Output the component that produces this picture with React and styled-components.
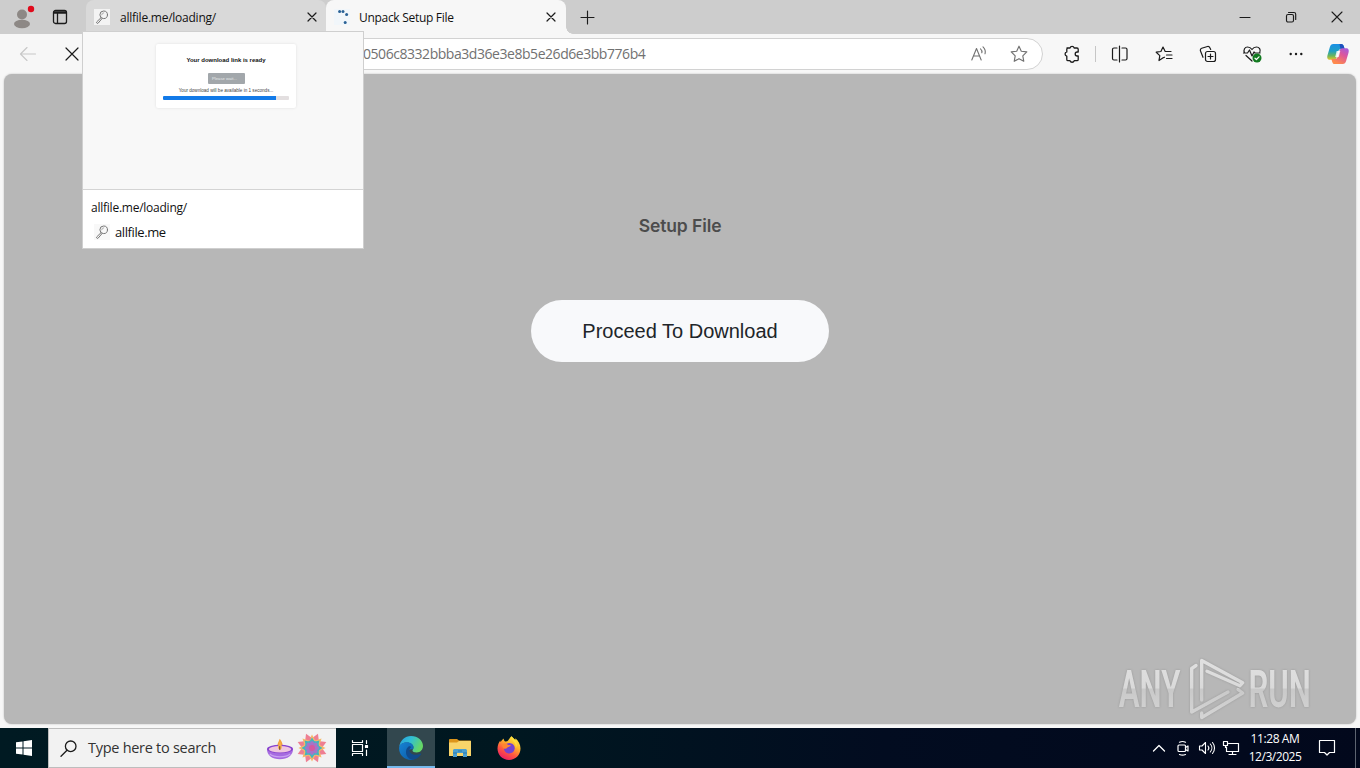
import React from "react";
import styled, { createGlobalStyle } from "styled-components";

const Global = createGlobalStyle`
  * { box-sizing: border-box; }
  html, body { margin: 0; padding: 0; background: #f7f7f7; overflow: hidden; }
  body { font-family: "Open Sans", "Noto Sans", sans-serif; color: #111; }
  svg { display: block; flex: none; }
`;

const Screen = styled.div`
  position: relative;
  display: flex;
  flex-direction: column;
  width: 1360px;
  height: 768px;
  background: #f7f7f7;
  overflow: hidden;
`;

const Label = styled.span`
  font-size: ${(p) => p.$size || 12}px;
  line-height: ${(p) => p.$line || 18}px;
  letter-spacing: ${(p) => p.$track || 0}px;
  color: ${(p) => p.$color || "#111"};
  white-space: nowrap;
`;

const Slot = styled.div`
  display: flex;
  align-items: center;
  justify-content: center;
  flex: none;
  width: ${(p) => p.$w}px;
  height: 100%;
`;

/* ---------- tab strip ---------- */
const TabStrip = styled.header`
  display: flex;
  height: 34px;
  flex: none;
  background: #cdcdcd;
`;
const ProfileArea = styled.div`
  display: flex;
  width: 86px;
  padding-left: 4px;
`;
const Tab = styled.div`
  display: flex;
  align-items: center;
  position: relative;
  width: 240px;
  height: 34px;
  padding: 0 8px;
  border-radius: 8px 8px 0 0;
  background: ${(p) => (p.$active ? "#f7f7f7" : "#d9d9d9")};
  &::after {
    content: "";
    display: ${(p) => (p.$active ? "block" : "none")};
    position: absolute;
    right: -7px;
    bottom: 0;
    width: 7px;
    height: 7px;
    background: radial-gradient(circle at 100% 0, transparent 6.5px, #f7f7f7 7px);
  }
`;
const TabTitle = styled.div`
  flex: 1;
  display: flex;
  padding: 1px 0 0 ${(p) => p.$pad}px;
`;
const WindowButtons = styled.div`
  display: flex;
  margin-left: auto;
`;
const Favicon = styled.span`
  display: flex;
  align-items: center;
  justify-content: center;
  width: 16px;
  height: 16px;
  background: ${(p) => p.$bg || "#f3f3f3"};
`;

/* ---------- toolbar ---------- */
const Toolbar = styled.nav`
  display: flex;
  align-items: center;
  height: 40px;
  flex: none;
  padding-left: 6px;
`;
const AddressBar = styled.div`
  display: flex;
  align-items: center;
  width: 949px;
  height: 32px;
  padding: 0 3px 0 268px;
  border: 1px solid #d2d2d2;
  border-radius: 16px;
  background: #fff;
`;
const AddressActions = styled.div`
  display: flex;
  height: 100%;
  margin-left: auto;
`;
const ToolGroup = styled.div`
  display: flex;
  height: 100%;
  align-items: center;
  padding-left: 9px;
`;
const Divider = styled.span`
  width: 1px;
  height: 16px;
  margin: 0 2px 0 3px;
  background: #c6c6c6;
`;

/* ---------- page ---------- */
const Page = styled.main`
  position: relative;
  display: flex;
  flex-direction: column;
  align-items: center;
  height: 650px;
  flex: none;
  margin: 0 4px 4px;
  padding-top: 138px;
  border-radius: 8px;
  background: #b7b7b7;
  box-shadow: 0 0 2px rgba(0, 0, 0, 0.25);
`;
const Heading = styled.h1`
  margin: 0;
  font: 600 17.5px/28px Inter, sans-serif;
  letter-spacing: -0.1px;
  color: #4c4c4c;
`;
const ProceedButton = styled.button`
  width: 298px;
  height: 62px;
  margin-top: 60px;
  padding: 0;
  border: 0;
  border-radius: 31px;
  background: #f8f9fb;
  color: #212529;
  font: 20px/30px "Liberation Sans", sans-serif;
`;
const Watermark = styled.div`
  position: absolute;
  right: 38px;
  bottom: 2px;
`;

/* ---------- tab hover card ---------- */
const HoverCard = styled.aside`
  position: absolute;
  z-index: 5;
  left: 82px;
  top: 31px;
  width: 282px;
  height: 218px;
  border: 1px solid #cfcfcf;
  background: #fff;
`;
const Preview = styled.div`
  display: flex;
  justify-content: center;
  align-items: flex-start;
  height: 158px;
  padding: 12px 0 0 6px;
  border-bottom: 1px solid #d4d4d4;
  background: #f8f8f8;
`;
const MiniCard = styled.div`
  display: flex;
  flex-direction: column;
  align-items: center;
  width: 140px;
  height: 64px;
  padding: 12px 7px 0;
  border-radius: 2px;
  background: #fff;
  box-shadow: 0 0 3px rgba(0, 0, 0, 0.1);
`;
const MiniTitle = styled.b`
  font: 700 6px/9px "Liberation Sans", sans-serif;
  color: #111;
  white-space: nowrap;
`;
const MiniButton = styled.span`
  width: 37px;
  height: 11px;
  margin-top: 8px;
  padding-right: 3px;
  border-radius: 1px;
  background: #a2a7ab;
  color: #e5e7e9;
  font: 4.2px/11px "Liberation Sans", sans-serif;
  text-align: center;
`;
const MiniNote = styled.span`
  margin-top: 3px;
  font: 4.6px/7px "Liberation Sans", sans-serif;
  color: #444;
  white-space: nowrap;
`;
const MiniTrack = styled.span`
  width: 126px;
  height: 4px;
  margin-top: 2px;
  border-radius: 1px;
  background: linear-gradient(90deg, #127ae8 113px, #e3dfe0 113px);
`;
const CardInfo = styled.div`
  display: flex;
  flex-direction: column;
  padding: 9px 8px 0;
`;
const CardSite = styled.div`
  display: flex;
  align-items: center;
  gap: 5px;
  margin-top: 6px;
  padding-left: 3px;
`;

/* ---------- taskbar ---------- */
const Taskbar = styled.footer`
  display: flex;
  height: 40px;
  flex: none;
  background: linear-gradient(90deg, #001a22 0, #001720 38%, #020c20 65%, #02081c 100%);
`;
const SearchBox = styled.div`
  display: flex;
  align-items: center;
  width: 288px;
  height: 40px;
  padding: 0 8px 0 11px;
  border: 1px solid #bdbdbd;
  border-right-width: 0;
  background: #f2f2f2;
`;
const SearchText = styled.div`
  flex: 1;
  display: flex;
  padding-left: 11px;
`;
const SearchArt = styled.div`
  display: flex;
  align-items: center;
  gap: 2px;
`;
const TaskButton = styled.div`
  display: flex;
  align-items: center;
  justify-content: center;
  width: ${(p) => p.$w || 48}px;
  height: 40px;
  padding-right: ${(p) => p.$shift || 0}px;
  ${(p) => p.$active && "background: #32474e; box-shadow: inset 0 -2px #76b9ed;"}
`;
const Tray = styled.div`
  display: flex;
  margin-left: auto;
`;
const Clock = styled.div`
  display: flex;
  flex-direction: column;
  align-items: center;
  width: 64px;
  padding-top: 2px;
`;
const ShowDesktop = styled.div`
  width: 5px;
  margin-left: 8px;
  border-left: 1px solid #5d6470;
`;

const Icon = ({ w = 20, h, stroke = "#1b1b1b", sw = 1.15, children }) => (
  <svg width={w} height={h || w} viewBox={`0 0 ${w} ${h || w}`} fill="none" stroke={stroke} strokeWidth={sw} strokeLinecap="round" strokeLinejoin="round">
    {children}
  </svg>
);

const MiniGlass = () => (
  <Icon w={16} stroke="#777" sw={1}>
    <circle cx="9.7" cy="5.8" r="3.8" />
    <path d="M7 8.7 2.6 13a1 1 0 0 0 1.5 1.2L8 9.6" />
    <path d="M7.7 5.8a2 2 0 0 1 2-2" stroke="#aaa" />
  </Icon>
);

const Cross = ({ s = 8, sw = 1.2 }) => (
  <Icon w={s + 2} sw={sw}>
    <path d={`M1 1 ${s + 1} ${s + 1}M${s + 1} 1 1 ${s + 1}`} />
  </Icon>
);

const Spinner = () => (
  <Icon w={16} stroke="none">
    <g fill="#2a6296">
      <circle cx="5.600" cy="2.400" r="1.500" />
      <circle cx="9" cy="2.400" r="1.500" />
      <circle cx="12.600" cy="5.500" r="1.500" />
      <circle cx="11.200" cy="13.500" r="1.500" />
    </g>
  </Icon>
);

const Avatar = () => (
  <Icon w={28} h={26} stroke="none">
    <circle cx="14" cy="10.500" r="5" fill="#8d8885" />
    <ellipse cx="14" cy="20" rx="8" ry="4.200" fill="#8d8885" />
    <circle cx="23" cy="5" r="3.200" fill="#e00b1c" />
  </Icon>
);

const Copilot = () => (
  <svg width="24" height="24" viewBox="0 0 24 24">
    <defs>
      <linearGradient id="cpa" x1="0" y1="0" x2="0" y2="1">
        <stop offset="0" stopColor="#1a8fe6" />
        <stop offset=".45" stopColor="#1f9fc4" />
        <stop offset=".75" stopColor="#6cb65a" />
        <stop offset="1" stopColor="#e8c42c" />
      </linearGradient>
      <linearGradient id="cpb" x1="1" y1="0" x2=".4" y2="1">
        <stop offset="0" stopColor="#9a5de8" />
        <stop offset=".45" stopColor="#dc559d" />
        <stop offset="1" stopColor="#ff8a4c" />
      </linearGradient>
    </defs>
    <path d="M7.2 2h8c1.6 0 2.200 1 2.700 2.600L18.600 7h-3.400c-1.800 0-2.600 1-3 2.400l-1.800 6.300c-.5 1.400-1.300 2.100-2.800 2.100H4C1.400 17.800.8 15.700 1.500 13.200L3.900 5C4.500 3 5.500 2 7.200 2Z" fill="url(#cpa)" />
    <path d="M13.500 2h1.700c1.600 0 2.200 1 2.700 2.600L18.600 7h-3.200c-1.500 0-1.700-5-1.900-5Z" fill="#1e50bd" />
    <path d="M16.800 22h-8c-1.600 0-2.200-1-2.700-2.600L5.400 17h3.400c1.800 0 2.600-1 3-2.400l1.800-6.300c.5-1.400 1.300-2.100 2.800-2.100H20c2.600 0 3.200 2.100 2.500 4.600L20.100 19c-.6 2-1.600 3-3.300 3Z" fill="url(#cpb)" />
    <path d="m10.700 9-1.500 6h3.500l1.600-6Z" fill="#fff" opacity=".85" />
  </svg>
);

const Diya = () => (
  <svg width="28" height="26" viewBox="0 0 30 26">
    <path d="M14.500 14c-4-3-1.700-6 .2-11 3.400 4.500 4.500 8.500.8 11Z" fill="#f3a13a" />
    <path d="M1 14c0 7 5.500 11 13.800 11S29 21 29 14Z" fill="#a66be0" />
    <ellipse cx="15" cy="14" rx="14" ry="4.500" fill="#8742ce" />
    <ellipse cx="15" cy="14.300" rx="12" ry="3.500" fill="#efc6df" />
    <path d="M4 19.500c5 4 17 4 22 0" stroke="#c9a0f2" strokeWidth="1.500" fill="none" />
    <path d="M14.500 15c-3-2.500-1.200-5 .2-9 2.500 3.500 3.300 7 .6 9Z" fill="#f7b04a" />
    <path d="M14.700 11v4" stroke="#6b4433" strokeWidth="1.200" />
  </svg>
);

const turns = [0, 45, 90, 135, 180, 225, 270, 315];
const Rangoli = () => (
  <svg width="32" height="32" viewBox="-16 -16 32 32">
    {turns.map((a) => (
      <g key={a} transform={`rotate(${a})`}>
        <path d="M0-15.500 3.200-10 0-6-3.200-10Z" fill="#ee7f92" transform="rotate(22.500)" />
        <path d="M0-13.500 4-6H-4Z" fill="#f7b968" />
      </g>
    ))}
    {turns.map((a) => (
      <path key={a} d="M0-10.500 4-4H-4Z" fill="#43b5bb" transform={`rotate(${a})`} />
    ))}
    <circle r="7.500" fill="#4fadc4" />
    {turns.map((a) => (
      <ellipse key={a} transform={`rotate(${a})`} cx="0" cy="-3.800" rx="1.900" ry="3" fill="#a873c8" />
    ))}
    <circle r="3" fill="#d4599f" />
  </svg>
);

const Edge = () => (
  <svg width="24" height="24" viewBox="0 0 24 24">
    <defs>
      <linearGradient id="ea" x1="0" y1="0" x2="1" y2=".4">
        <stop offset="0" stopColor="#279de0" />
        <stop offset=".5" stopColor="#31bfd4" />
        <stop offset="1" stopColor="#65d766" />
      </linearGradient>
      <linearGradient id="eb" x1="0" y1="0" x2="1" y2="1">
        <stop offset="0" stopColor="#1683d5" />
        <stop offset="1" stopColor="#0c59a4" />
      </linearGradient>
    </defs>
    <path d="M.2 11C1 4.500 6 0 12 0c7 0 12 4.800 12 10 0 3.800-2.800 6.400-6.200 6.400-2.800 0-4.300-1-4.300-2 0-.7 1-1.100 1-2.900C14.500 8.600 11.500 6.400 8 6.400 4 6.400.8 8.500.2 11Z" fill="url(#ea)" />
    <path d="M.1 12C.3 8.500 3.700 6.300 8 6.300c3.700 0 6.500 2.200 6.500 5.200 0 .8-.3 1.500-.7 2-2-.9-5 .2-5 3.500 0 3.800 3.200 6.300 7 5.400C14.600 23.600 13.400 24 12 24 5.200 24-.2 18.500.1 12Z" fill="url(#eb)" />
    <path d="M9.600 10.500C7.600 12 7 14 7 16.200c0 4 3 7 6.700 7.600 3.600-.4 6.700-2.400 8.400-5.500.3-.6-.1-.9-.7-.6-5.500 2.500-10.900.3-10.900-3.400 0-1.600.8-2.500 1.800-3.300-.7-.8-1.700-1-2.700-.5Z" fill="#114a8b" />
  </svg>
);

const Folder = () => (
  <svg width="22" height="20" viewBox="0 0 22 20">
    <path d="M0 2C0 1.300.5 1 1.300 1H8l2 1.500h11c.6 0 1 .4 1 1v4H0Z" fill="#dc951b" />
    <path d="M0 4.500h8L10 3h12v15H0Z" fill="#f8d46a" />
    <path d="M4 19v-6.500c0-1 .7-1.500 1.800-1.500h10.400c1 0 1.800.5 1.800 1.500V19h-4v-4H8v4Z" fill="#4a9fd0" />
    <path d="M4 15h4M14 15h4M9 13h4" stroke="#2a78aa" />
  </svg>
);

const Firefox = () => (
  <svg width="24" height="24" viewBox="0 0 24 24">
    <defs>
      <linearGradient id="ffa" x1=".8" y1="0" x2=".25" y2="1">
        <stop offset="0" stopColor="#fff044" />
        <stop offset=".35" stopColor="#ffb52b" />
        <stop offset=".65" stopColor="#ff593f" />
        <stop offset="1" stopColor="#eb1769" />
      </linearGradient>
    </defs>
    <path d="M14.500.2c1.200 1.500 2.700 2.500 3.500 3.800.5-.6.500-1.100.3-1.800 3.100 2.400 5.200 6.200 5.200 10.300C23.500 19 18.400 24 12 24S.5 19 .5 12.500C.5 9 2 6 3.300 4.500c0 .7.100 1.200.4 1.600C4.500 4.500 5.600 3.200 6.800 2.500 6.600 4 7.300 5 8.500 5.600c3.500.1 3.300-3.400 6-5.400Z" fill="url(#ffa)" />
    <path d="M7.500 9.500c1.500-1.700 3.500-2.700 6-2.300 3 .5 4.600 3 4.200 5.600-.4 2.800-2.700 4.700-5.500 4.700s-5.200-2.200-5.200-5Z" fill="#7543d0" />
    <path d="M5 8.500C7 7 9.700 7.400 11 9c1.700-.2 2.700.2 3 .8-1.500 1.200-3 .8-3.800 2-1 1.500-3.500 1.200-4.500-.3Z" fill="#ff8432" />
    <path d="M14.500.2c-2 3.800 5.700 5.300 4.200 12 2.300-3.300.7-6.200-.7-8.200-.8-1.300-2.300-2.300-3.500-3.800Z" fill="#ffdf3d" />
  </svg>
);

const AnyRunMark = () => (
  <svg width="204" height="72" viewBox="0 0 204 72">
    <defs>
      <linearGradient id="wm" x1="0" y1="0" x2="0" y2="72" gradientUnits="userSpaceOnUse">
        <stop offset="0" stopColor="#e2e2e2" />
        <stop offset=".53" stopColor="#dadada" />
        <stop offset=".54" stopColor="#c9c9c9" />
        <stop offset="1" stopColor="#d6d6d6" />
      </linearGradient>
    </defs>
    <g fill="url(#wm)" fontFamily="Roboto, sans-serif" fontWeight="600" fontSize="52" style={{ filter: "drop-shadow(0 0 1px #999)" }}>
      <text transform="scale(.6 1)" x="8" y="57">ANY</text>
      <text transform="scale(.6 1)" x="224" y="57">RUN</text>
      <g fill="none" stroke="url(#wm)" strokeWidth="3.4" strokeLinejoin="round" strokeLinecap="round">
        <path d="M82 15.500 77.700 18.500V62L114 42" />
        <path d="M87.700 50V10.500l41 22.200-2.700 3-33-14.500" />
        <path d="M87.700 63v4.500l41-24.500-4.700-3.500" />
      </g>
    </g>
  </svg>
);

export default function App() {
  return (
    <Screen>
      <Global />
      <TabStrip>
        <ProfileArea>
          <Slot $w={36}><Avatar /></Slot>
          <Slot $w={40}>
            <Icon w={16} sw={1.300}>
              <rect x="1.500" y="1.500" width="13" height="13" rx="2" />
              <path d="M2 3h12M2 4.200h12M5.500 5v9" />
            </Icon>
          </Slot>
        </ProfileArea>
        <Tab>
          <Favicon><MiniGlass /></Favicon>
          <TabTitle $pad={10}><Label $track={-0.24}>allfile.me/loading/</Label></TabTitle>
          <Slot $w={13}><Cross /></Slot>
        </Tab>
        <Tab $active>
          <Favicon $bg="#f1f6fa"><Spinner /></Favicon>
          <TabTitle $pad={9}><Label $track={-0.3}>Unpack Setup File</Label></TabTitle>
          <Slot $w={15}><Cross /></Slot>
        </Tab>
        <Slot $w={43}>
          <Icon w={15}><path d="M7.500 1v13M1 7.500h13" /></Icon>
        </Slot>
        <WindowButtons>
          <Slot $w={46}><Icon w={12}><path d="M1 6.500h10" /></Icon></Slot>
          <Slot $w={46}>
            <Icon w={12}>
              <rect x="1.500" y="3.500" width="7" height="7.500" rx="1.500" />
              <path d="M3.500 1.500H9A1.700 1.700 0 0 1 10.700 3.200V8.500" />
            </Icon>
          </Slot>
          <Slot $w={46}><Cross s={10} sw={1.100} /></Slot>
        </WindowButtons>
      </TabStrip>

      <Toolbar>
        <Slot $w={44}>
          <Icon w={18} stroke="#c8c8c8"><path d="M16.500 9H2M8 2.500 1.500 9 8 15.500" /></Icon>
        </Slot>
        <Slot $w={44}><Cross s={12} sw={1.200} /></Slot>
        <AddressBar>
          <Label $size={14} $line={20} $track={-0.455} $color="#717171">0506c8332bbba3d36e3e8b5e26d6e3bb776b4</Label>
          <AddressActions>
            <Slot $w={40}>
              <Icon w={16} stroke="#717171" sw={1.100}>
                <path d="M.8 14 5.500 2.500 10.200 14M2.500 10h6M9.500 2.800a4 4 0 0 1 1.300 4M12 .8a7 7 0 0 1 2 7" />
              </Icon>
            </Slot>
            <Slot $w={40}>
              <Icon w={18} stroke="#717171">
                <path d="m9 1.200 2.300 5 5.500.7-4 3.900 1 5.500L9 13.700l-4.800 2.600 1-5.500-4-3.900 5.500-.7Z" />
              </Icon>
            </Slot>
          </AddressActions>
        </AddressBar>
        <ToolGroup>
          <Slot $w={40}>
            <Icon w={18} sw={1.300}>
              <path d="M4 3h3a2.200 2.200 0 0 1 4.200 0H14a1.200 1.200 0 0 1 1.200 1.200V7h-1a2 2 0 0 0 0 4h1v3.500a1.200 1.200 0 0 1-1.200 1.200h-2.800a2.200 2.200 0 0 1-4.200 0H5a1.200 1.200 0 0 1-1.200-1.200v-3.300a2.200 2.200 0 0 1 0-4.300V4.200A1.200 1.200 0 0 1 5 3" />
            </Icon>
          </Slot>
          <Divider />
          <Slot $w={44}>
            <Icon w={18} sw={1.200}>
              <path d="M8.500 1v16M6 3H3a1.500 1.500 0 0 0-1.500 1.500v9A1.500 1.500 0 0 0 3 15h3M11 3H14.500a1.500 1.500 0 0 1 1.500 1.500v9A1.500 1.500 0 0 1 14.500 15H11" />
            </Icon>
          </Slot>
          <Slot $w={44}>
            <Icon w={18} sw={1.200}>
              <path d="M9.500 12.200 7.800 12.900 4 15.500l.8-4.900L1.200 7.200l4.700-.7L8 2l2.200 4.500H16M11.500 10H17M11.500 13.500H17" />
            </Icon>
          </Slot>
          <Slot $w={44}>
            <Icon w={18} sw={1.200}>
              <rect x="6.500" y="6.500" width="10" height="10" rx="2" />
              <path d="M11.500 9v5M9 11.500h5M4 12.300 1.500 6A2 2 0 0 1 2.700 3.300L8.500 1.500A2 2 0 0 1 11 3l.7 1.500" />
            </Icon>
          </Slot>
          <Slot $w={44}>
            <Icon w={20} sw={1.200}>
              <path d="M2.500 9C1 5.500 3 3 5.500 3c2 0 3.500 1 4.500 2.500C11 4 12.500 3 14.500 3c2.700 0 4.500 2.500 3.300 5.500M4 11.500l6 5.500M1.500 9h4l2-3 2.500 6 2-4 1 1h5" />
              <circle cx="15" cy="14" r="4.500" fill="#127a20" stroke="none" />
              <path d="m13 14.200 1.400 1.300 2.600-2.700" stroke="#fff" />
            </Icon>
          </Slot>
          <Slot $w={44}>
            <Icon w={16} stroke="none">
              <g fill="#1b1b1b"><circle cx="2.700" cy="8" r="1.200" /><circle cx="8" cy="8" r="1.200" /><circle cx="13.300" cy="8" r="1.200" /></g>
            </Icon>
          </Slot>
          <Slot $w={40}><Copilot /></Slot>
        </ToolGroup>
      </Toolbar>

      <Page>
        <Heading>Setup File</Heading>
        <ProceedButton>Proceed To Download</ProceedButton>
        <Watermark><AnyRunMark /></Watermark>
      </Page>

      <Taskbar>
        <TaskButton>
          <svg width="16" height="16" viewBox="0 0 16 16" fill="#fff">
            <path d="M0 2.300 6.500 1.400V7.500H0ZM7.500 1.200 16 0v7.500H7.500ZM0 8.500h6.500v6.100L0 13.700ZM7.500 8.500H16V16l-8.500-1.200Z" />
          </svg>
        </TaskButton>
        <SearchBox>
          <Icon w={17} sw={1.300}>
            <circle cx="10.700" cy="6.300" r="5.300" />
            <path d="M7 10.200 1 16.200" />
          </Icon>
          <SearchText><Label $size={14.5} $line={22} $track={-0.28} $color="#333">Type here to search</Label></SearchText>
          <SearchArt><Diya /><Rangoli /></SearchArt>
        </SearchBox>
        <TaskButton $w={51} $shift={4}>
          <Icon w={18} stroke="#fff" sw={1.200}>
            <path d="M1.500 1.500v2h10v-2M1.500 16.500v-2h10v2M15.500 1.500v3M15.500 11v5.500" />
            <rect x="1.500" y="5.500" width="10" height="7" />
            <rect x="14.500" y="6.500" width="2" height="2" fill="#fff" />
          </Icon>
        </TaskButton>
        <TaskButton $active><Edge /></TaskButton>
        <TaskButton $w={49}><Folder /></TaskButton>
        <TaskButton $w={49}><Firefox /></TaskButton>
        <Tray>
          <Slot $w={24}><Icon w={14} stroke="#fff" sw={1.300}><path d="m1.500 10 5.500-5.500L12.500 10" /></Icon></Slot>
          <Slot $w={24}>
            <Icon w={16} stroke="#fff" sw={1.200}>
              <rect x="3" y="5" width="7.500" height="6.500" rx="1" />
              <path d="m10.500 7.500 2.500-1.500v5l-2.500-1.500M4.500 2.200a7 7 0 0 1 6 0M4.500 14.500a7 7 0 0 0 6 0" />
            </Icon>
          </Slot>
          <Slot $w={24}>
            <Icon w={18} h={16} stroke="#fff" sw={1.100}>
              <path d="M1.500 6H4l3.500-3.500v11L4 10H1.500ZM10 6a3 3 0 0 1 0 4M12.300 4a6 6 0 0 1 0 8M14.500 2.500a8.500 8.500 0 0 1 0 11" />
            </Icon>
          </Slot>
          <Slot $w={24}>
            <Icon w={18} h={16} stroke="#fff" sw={1.200}>
              <path d="M6.500 3.500H16.500v8h-12V7M10.500 11.500v3M7 14.500h7" />
              <rect x="1.500" y="1.500" width="4" height="4" />
              <path d="M3.500 5.500v2" />
            </Icon>
          </Slot>
          <Clock>
            <Label $track={-0.400} $color="#fff">11:28 AM</Label>
            <Label $track={-0.460} $color="#fff">12/3/2025</Label>
          </Clock>
          <Slot $w={40}>
            <Icon w={18} stroke="#fff" sw={1.200}>
              <path d="M1.500 1.500h15v12H11.500L9 16 6.500 13.500h-5Z" />
            </Icon>
          </Slot>
          <ShowDesktop />
        </Tray>
      </Taskbar>

      <HoverCard>
        <Preview>
          <MiniCard>
            <MiniTitle>Your download link is ready</MiniTitle>
            <MiniButton>Please wait...</MiniButton>
            <MiniNote>Your download will be available in 1 seconds...</MiniNote>
            <MiniTrack />
          </MiniCard>
        </Preview>
        <CardInfo>
          <Label $track={-0.240}>allfile.me/loading/</Label>
          <CardSite>
            <Favicon $bg="#f8f8f8"><MiniGlass /></Favicon>
            <Label $size={13} $track={-0.400}>allfile.me</Label>
          </CardSite>
        </CardInfo>
      </HoverCard>
    </Screen>
  );
}
